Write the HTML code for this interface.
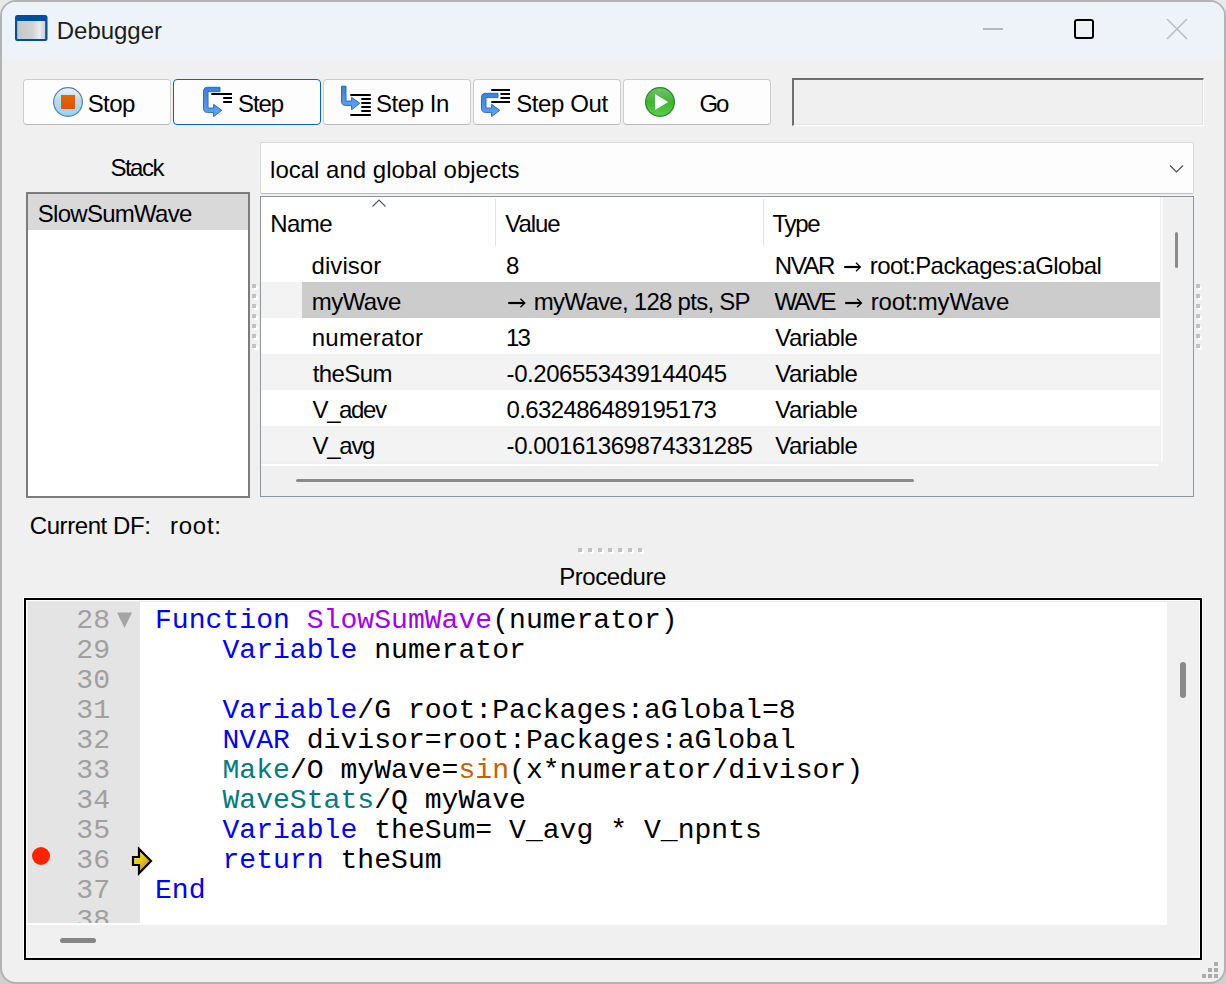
<!DOCTYPE html>
<html><head><meta charset="utf-8">
<style>
html,body{margin:0;padding:0;}
body{width:1226px;height:984px;overflow:hidden;background:linear-gradient(#e9e9e9,#cfcfcf);position:relative;font-family:"Liberation Sans",sans-serif;}
.a{position:absolute;}
.win{position:absolute;left:0;top:0;width:1222px;height:980px;border:2px solid #b3b3b3;border-radius:16px;background:#f0f0f0;overflow:hidden;}
.title{position:absolute;left:0;top:0;width:1222px;height:56px;background:#eef3fa;}
.t{position:absolute;font-size:24px;line-height:20px;white-space:pre;color:#000;letter-spacing:-0.6px;}
.btn{position:absolute;top:79px;width:146px;height:44px;border:1px solid #cdcdcd;border-bottom-color:#b9b9b9;border-radius:4px;background:#fdfdfd;}
.btn.def{border:1px solid #0067c0;}
.code{position:absolute;font-family:"Liberation Mono",monospace;font-size:28.1px;line-height:30px;white-space:pre;color:#000;}
.ln{position:absolute;font-family:"Liberation Mono",monospace;font-size:28.1px;line-height:30px;white-space:pre;color:#a0a0a0;text-align:right;}
.kw{color:#0000ff;}
.fn{color:#a000f0;}
.op{color:#007b7b;}
.bi{color:#c85f00;}
.dot{position:absolute;width:4px;height:4px;background:#c2c2c2;box-shadow:2px 2px 0 #fff;}
</style></head><body>
<div class="win"><div class="title"></div></div>

<!-- title bar -->
<svg class="a" style="left:15px;top:15px" width="33" height="27" viewBox="0 0 33 27">
  <defs><linearGradient id="ig" x1="0" y1="0" x2="1" y2="0">
    <stop offset="0" stop-color="#c6c6c6"/><stop offset="0.55" stop-color="#d2d2d2"/><stop offset="0.8" stop-color="#ececec"/><stop offset="1" stop-color="#cdcdcd"/></linearGradient></defs>
  <rect x="0" y="0" width="32.5" height="26" rx="2.5" fill="#004f9c"/>
  <rect x="2.2" y="6" width="28" height="18" fill="url(#ig)"/>
</svg>
<div class="a" style="left:983px;top:28px;width:20px;height:2px;background:#b6b9bc"></div>
<div class="a" style="left:1074px;top:19px;width:16px;height:15.5px;border:2px solid #000;border-radius:3px"></div>
<svg class="a" style="left:1166px;top:18px" width="22" height="22" viewBox="0 0 22 22"><path d="M1.5 1.5 L20.5 20.5 M20.5 1.5 L1.5 20.5" stroke="#b9bec2" stroke-width="1.6" stroke-linecap="round"/></svg>

<!-- buttons -->
<div class="btn" style="left:23px"></div>
<div class="btn def" style="left:173px"></div>
<div class="btn" style="left:323px"></div>
<div class="btn" style="left:473px"></div>
<div class="btn" style="left:623px"></div>


<!-- icons -->
<svg class="a" style="left:48px;top:82px" width="40" height="40" viewBox="0 0 40 40">
 <defs><linearGradient id="sg" x1="0" y1="0" x2="0" y2="1"><stop offset="0" stop-color="#f0f3f8"/><stop offset="0.45" stop-color="#b9dcee"/><stop offset="1" stop-color="#8fd6ee"/></linearGradient>
 <linearGradient id="sq" x1="0" y1="0" x2="0" y2="1"><stop offset="0" stop-color="#e06808"/><stop offset="1" stop-color="#dd5205"/></linearGradient></defs>
 <circle cx="20" cy="20" r="14.4" fill="url(#sg)" stroke="#5b7fa6" stroke-width="1.2"/>
 <rect x="12.5" y="12.5" width="15" height="15" fill="#b8e6f8" opacity="0.6"/>
 <rect x="13" y="13" width="14" height="14" fill="url(#sq)"/>
</svg>
<svg class="a" style="left:198px;top:82px" width="40" height="40" viewBox="0 0 40 40">
 <defs><linearGradient id="bg1" x1="0" y1="0" x2="0" y2="1"><stop offset="0" stop-color="#3b7fd9"/><stop offset="1" stop-color="#62a6f4"/></linearGradient></defs>
 <path d="M22 5.3 L9.6 5.3 Q5.5 5.3 5.5 9.6 L5.5 26.3 Q5.5 30.4 9.6 30.4 L15.6 30.4 L15.6 34.6 L23.8 28.3 L15.6 22.3 L15.6 26.1 L10 26.1 L10 9.7 L22 9.7 Z" fill="url(#bg1)" stroke="#2a69c6" stroke-width="1" stroke-linejoin="round"/>
 <path d="M13.3 12 H34 M25.2 16 H34 M25.2 20 H34" stroke="#000" stroke-width="2"/>
</svg>
<svg class="a" style="left:336px;top:82px" width="40" height="40" viewBox="0 0 40 40">
 <defs><linearGradient id="bg2" x1="0" y1="0" x2="0" y2="1"><stop offset="0" stop-color="#3b7fd9"/><stop offset="1" stop-color="#62a6f4"/></linearGradient></defs>
 <path d="M5.5 4.2 L10 4.2 L10 19.1 L15.6 19.1 L15.6 15.3 L23.8 21.3 L15.6 27.7 L15.6 23.4 L9.8 23.4 Q5.5 23.4 5.5 19.2 Z" fill="url(#bg2)" stroke="#2a69c6" stroke-width="1" stroke-linejoin="round"/>
 <path d="M14.3 12.9 H34.8 M25.3 16.9 H34.8 M25.3 20.9 H34.8 M25.3 25 H34.8 M25.3 28.9 H34.8 M14.3 33 H34.8" stroke="#000" stroke-width="2"/>
</svg>
<svg class="a" style="left:476px;top:82px" width="40" height="40" viewBox="0 0 40 40">
 <defs><linearGradient id="bg3" x1="0" y1="0" x2="0" y2="1"><stop offset="0" stop-color="#3b7fd9"/><stop offset="1" stop-color="#62a6f4"/></linearGradient></defs>
 <path d="M22 11.3 L9.6 11.3 Q5.5 11.3 5.5 15.4 L5.5 26.3 Q5.5 30.4 9.6 30.4 L15.6 30.4 L15.6 34.6 L23.8 28.3 L15.6 22.3 L15.6 26.1 L10 26.1 L10 15.6 L22 15.6 Z" fill="url(#bg3)" stroke="#2a69c6" stroke-width="1" stroke-linejoin="round"/>
 <path d="M15.3 7.9 H34 M24.5 12 H34 M24.5 15.9 H34 M15.3 19.9 H34" stroke="#000" stroke-width="2"/>
</svg>
<svg class="a" style="left:640px;top:82px" width="40" height="40" viewBox="0 0 40 40">
 <defs><linearGradient id="gg" x1="0" y1="0" x2="0" y2="1"><stop offset="0" stop-color="#74c274"/><stop offset="0.5" stop-color="#3db52f"/><stop offset="1" stop-color="#5ccf52"/></linearGradient></defs>
 <circle cx="20" cy="20" r="14.4" fill="url(#gg)" stroke="#1f8c1f" stroke-width="1.2"/>
 <path d="M15 12 L28.2 20 L15 28 Z" fill="#fff"/>
</svg>

<!-- status box -->
<div class="a" style="left:792px;top:78px;width:409px;height:45px;border-style:solid;border-width:2px 1px 1px 2px;border-color:#6e6e6e #ffffff #ffffff #6e6e6e;box-shadow:inset -1px -1px 0 #e3e3e3;background:#f0f0f0"></div>


<!-- stack -->
<div class="a" style="left:26px;top:192px;width:220px;height:302px;border:2px solid #7c7c7c;background:#fff"></div>
<div class="a" style="left:28px;top:194px;width:220px;height:36px;background:#d9d9d9"></div>

<!-- combobox -->
<div class="a" style="left:260px;top:142px;width:932px;height:50px;border:1px solid #d9d9d9;border-bottom-color:#bdbdbd;border-radius:2px;background:#fdfdfd"></div>
<svg class="a" style="left:1168px;top:162px" width="17" height="12" viewBox="0 0 17 12"><path d="M2 3.5 L8.5 10 L15 3.5" fill="none" stroke="#4a4a4a" stroke-width="1.1"/></svg>

<!-- table -->
<div class="a" style="left:260px;top:196px;width:932px;height:299px;border:1px solid #8c949c;background:#f0f0f0"></div>
<div class="a" style="left:261px;top:197px;width:899px;height:265px;background:#fff"></div>
<div class="a" style="left:261px;top:282px;width:899px;height:36px;background:#f3f3f3"></div>
<div class="a" style="left:261px;top:354px;width:899px;height:36px;background:#f3f3f3"></div>
<div class="a" style="left:261px;top:426px;width:899px;height:36px;background:#f3f3f3"></div>
<div class="a" style="left:302px;top:282px;width:858px;height:36px;background:#cccccc"></div>
<div class="a" style="left:261px;top:464px;width:897px;height:2px;background:#fff"></div>
<div class="a" style="left:1161px;top:198px;width:2px;height:264px;background:#fafafa"></div>
<div class="a" style="left:1175px;top:232px;width:3px;height:36px;border-radius:2px;background:#8a8a8a"></div>
<div class="a" style="left:296px;top:479px;width:618px;height:3px;border-radius:2px;background:#8a8a8a"></div>
<div class="a" style="left:495px;top:199px;width:1px;height:47px;background:#e5e5e5"></div>
<div class="a" style="left:763px;top:199px;width:1px;height:47px;background:#e5e5e5"></div>
<svg class="a" style="left:371px;top:198px" width="16" height="10" viewBox="0 0 16 10"><path d="M1.5 8.5 L8 2 L14.5 8.5" fill="none" stroke="#555" stroke-width="1.1"/></svg>




<!-- splitter dots -->
<div class="dot" style="left:252px;top:284px"></div><div class="dot" style="left:252px;top:294px"></div><div class="dot" style="left:252px;top:304px"></div><div class="dot" style="left:252px;top:314px"></div><div class="dot" style="left:252px;top:324px"></div><div class="dot" style="left:252px;top:334px"></div><div class="dot" style="left:252px;top:344px"></div>
<div class="dot" style="left:1196px;top:284px"></div><div class="dot" style="left:1196px;top:294px"></div><div class="dot" style="left:1196px;top:304px"></div><div class="dot" style="left:1196px;top:314px"></div><div class="dot" style="left:1196px;top:324px"></div><div class="dot" style="left:1196px;top:334px"></div><div class="dot" style="left:1196px;top:344px"></div>
<div class="dot" style="left:578px;top:548px"></div><div class="dot" style="left:588px;top:548px"></div><div class="dot" style="left:598px;top:548px"></div><div class="dot" style="left:608px;top:548px"></div><div class="dot" style="left:618px;top:548px"></div><div class="dot" style="left:628px;top:548px"></div><div class="dot" style="left:638px;top:548px"></div>



<div class="t" style="left:56.80px;top:20.68px;letter-spacing:-0.031px;color:#1c1c1c">Debugger</div>
<div class="t" style="left:87.70px;top:93.68px;letter-spacing:-0.574px">Stop</div>
<div class="t" style="left:238.00px;top:93.68px;letter-spacing:-1.074px">Step</div>
<div class="t" style="left:376.00px;top:93.68px;letter-spacing:-0.451px">Step In</div>
<div class="t" style="left:516.20px;top:93.68px;letter-spacing:-0.379px">Step Out</div>
<div class="t" style="left:699.60px;top:93.68px;letter-spacing:-2.368px">Go</div>
<div class="t" style="left:110.40px;top:157.68px;letter-spacing:-1.506px">Stack</div>
<div class="t" style="left:37.80px;top:203.68px;letter-spacing:-0.728px">SlowSumWave</div>
<div class="t" style="left:270.10px;top:159.68px;letter-spacing:-0.000px">local and global objects</div>
<div class="t" style="left:270.20px;top:213.68px;letter-spacing:-0.557px">Name</div>
<div class="t" style="left:505.30px;top:213.68px;letter-spacing:-1.088px">Value</div>
<div class="t" style="left:772.50px;top:213.68px;letter-spacing:-1.295px">Type</div>
<div class="t" style="left:311.60px;top:255.68px;letter-spacing:0.040px">divisor</div>
<div class="t" style="left:311.80px;top:291.68px;letter-spacing:-0.580px">myWave</div>
<div class="t" style="left:311.80px;top:327.68px;letter-spacing:0.226px">numerator</div>
<div class="t" style="left:312.80px;top:363.68px;letter-spacing:-0.604px">theSum</div>
<div class="t" style="left:312.60px;top:399.68px;letter-spacing:-1.420px">V_adev</div>
<div class="t" style="left:312.60px;top:435.68px;letter-spacing:-1.301px">V_avg</div>
<div class="t" style="left:505.90px;top:255.68px;letter-spacing:0.000px">8</div>
<div class="t" style="left:533.80px;top:291.68px;letter-spacing:-0.725px">myWave, 128 pts, SP</div>
<div class="t" style="left:506.00px;top:327.68px;letter-spacing:-1.948px">13</div>
<div class="t" style="left:506.60px;top:363.68px;letter-spacing:-0.451px">-0.206553439144045</div>
<div class="t" style="left:506.40px;top:399.68px;letter-spacing:-0.611px">0.632486489195173</div>
<div class="t" style="left:506.60px;top:435.68px;letter-spacing:-0.451px">-0.00161369874331285</div>
<div class="t" style="left:774.70px;top:255.68px;letter-spacing:-1.389px">NVAR</div>
<div class="t" style="left:869.80px;top:255.68px;letter-spacing:-0.539px">root:Packages:aGlobal</div>
<div class="t" style="left:774.40px;top:291.68px;letter-spacing:-1.932px">WAVE</div>
<div class="t" style="left:870.80px;top:291.68px;letter-spacing:-0.202px">root:myWave</div>
<div class="t" style="left:775.30px;top:327.68px;letter-spacing:-0.532px">Variable</div>
<div class="t" style="left:775.30px;top:363.68px;letter-spacing:-0.532px">Variable</div>
<div class="t" style="left:775.30px;top:399.68px;letter-spacing:-0.532px">Variable</div>
<div class="t" style="left:775.30px;top:435.68px;letter-spacing:-0.532px">Variable</div>
<div class="t" style="left:29.80px;top:515.68px;letter-spacing:-0.429px">Current DF:</div>
<div class="t" style="left:170.10px;top:515.68px;letter-spacing:0.711px">root:</div>
<div class="t" style="left:559.20px;top:567.18px;letter-spacing:-0.448px">Procedure</div>
<svg class="a" style="left:508.0px;top:296.9px" width="18.0" height="12" viewBox="0 0 18.0 12"><path d="M0.2 6 H16.4" stroke="#000" stroke-width="2.2"/><path d="M12.4 1.8 L16.8 6 L12.4 10.2" fill="none" stroke="#000" stroke-width="1.3"/></svg>
<svg class="a" style="left:843.9px;top:260.6px" width="17.6" height="12" viewBox="0 0 17.6 12"><path d="M0.2 6 H16.0" stroke="#000" stroke-width="2.2"/><path d="M12.0 1.8 L16.4 6 L12.0 10.2" fill="none" stroke="#000" stroke-width="1.3"/></svg>
<svg class="a" style="left:845.3px;top:296.8px" width="17.7" height="12" viewBox="0 0 17.7 12"><path d="M0.2 6 H16.1" stroke="#000" stroke-width="2.2"/><path d="M12.1 1.8 L16.5 6 L12.1 10.2" fill="none" stroke="#000" stroke-width="1.3"/></svg>

<!-- editor -->
<div class="a" style="left:23px;top:597px;width:1178px;height:361px;border:1px solid #fff;"></div>
<div class="a" style="left:24px;top:598px;width:1174px;height:358px;border:2px solid #000;background:#f0f0f0"></div>
<div class="a" style="left:26px;top:600px;width:1172px;height:355px;border:1px solid #fff;border-width:1px 0 0 1px"></div>
<div class="a" style="left:27px;top:601px;width:1172px;height:1px;background:#ebebeb"></div>
<div class="a" style="left:28px;top:602px;width:112px;height:321px;background:#e4e4e4"></div>
<div class="a" style="left:140px;top:602px;width:1027px;height:323px;background:#fff"></div>
<div class="a" style="left:27px;top:923px;width:113px;height:2px;background:#fff"></div>
<div class="a" style="left:27px;top:956px;width:1173px;height:1px;background:#fff"></div>
<div class="a" style="left:1199px;top:601px;width:1px;height:356px;background:#fff"></div>
<div class="a" style="left:1180px;top:662px;width:6px;height:36px;border-radius:3px;background:#8a8a8a"></div>
<div class="a" style="left:60px;top:938px;width:36px;height:5px;border-radius:3px;background:#868686"></div>

<div class="a" style="left:28px;top:602px;width:112px;height:321px;overflow:hidden">
<div class="ln" style="left:0;top:3.5px;width:82px">28
29
30
31
32
33
34
35
36
37
38</div>
</div>
<svg class="a" style="left:116px;top:611px" width="17" height="18" viewBox="0 0 17 18"><path d="M1 1.5 H16 L8.5 17 Z" fill="#a4a4a4"/></svg>
<div class="a" style="left:32px;top:847px;width:18px;height:18px;border-radius:50%;background:#ff2200"></div>
<svg class="a" style="left:130px;top:845px" width="24" height="32" viewBox="0 0 24 32">
 <defs><linearGradient id="ar" x1="0" y1="0" x2="1" y2="1"><stop offset="0" stop-color="#fff040"/><stop offset="0.5" stop-color="#e8c020"/><stop offset="1" stop-color="#a87800"/></linearGradient></defs>
 <path d="M3 12 L9 12 L9 4 L21 16 L9 28.2 L9 20 L3 20 Z" fill="url(#ar)" stroke="#000" stroke-width="2.2" stroke-linejoin="miter"/>
</svg>

<div class="a" style="left:140px;top:602px;width:1027px;height:323px;overflow:hidden">
<div class="code" style="left:15px;top:3.5px"><span class="kw">Function</span> <span class="fn">SlowSumWave</span>(numerator)
    <span class="kw">Variable</span> numerator

    <span class="kw">Variable</span>/G root:Packages:aGlobal=8
    <span class="kw">NVAR</span> divisor=root:Packages:aGlobal
    <span class="op">Make</span>/O myWave=<span class="bi">sin</span>(x*numerator/divisor)
    <span class="op">WaveStats</span>/Q myWave
    <span class="kw">Variable</span> theSum= V_avg * V_npnts
    <span class="kw">return</span> theSum
<span class="kw">End</span>
</div>
</div>

<!-- resize grip -->
<div class="a" style="left:1214px;top:962px;width:4px;height:4px;background:#ababab"></div>
<div class="a" style="left:1208px;top:968px;width:4px;height:4px;background:#ababab"></div>
<div class="a" style="left:1214px;top:968px;width:4px;height:4px;background:#ababab"></div>
<div class="a" style="left:1202px;top:974px;width:4px;height:4px;background:#ababab"></div>
<div class="a" style="left:1208px;top:974px;width:4px;height:4px;background:#ababab"></div>
<div class="a" style="left:1214px;top:974px;width:4px;height:4px;background:#ababab"></div>

</body></html>
